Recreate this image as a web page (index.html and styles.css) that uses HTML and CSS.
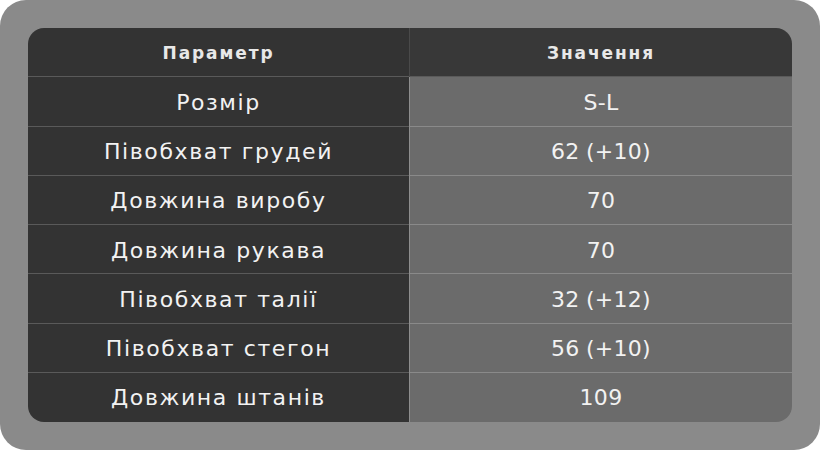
FILE: index.html
```html
<!DOCTYPE html>
<html lang="uk">
<head>
<meta charset="utf-8">
<link rel="stylesheet" href="styles.css">
</head>
<body>
<div class="frame">
  <div class="table">
    <div class="row head">
      <div class="cell key">Параметр</div>
      <div class="cell val">Значення</div>
    </div>
    <div class="row">
      <div class="cell key">Розмір</div>
      <div class="cell val">S-L</div>
    </div>
    <div class="row">
      <div class="cell key">Півобхват грудей</div>
      <div class="cell val">62 (+10)</div>
    </div>
    <div class="row">
      <div class="cell key">Довжина виробу</div>
      <div class="cell val">70</div>
    </div>
    <div class="row">
      <div class="cell key">Довжина рукава</div>
      <div class="cell val">70</div>
    </div>
    <div class="row">
      <div class="cell key">Півобхват талії</div>
      <div class="cell val">32 (+12)</div>
    </div>
    <div class="row">
      <div class="cell key">Півобхват стегон</div>
      <div class="cell val">56 (+10)</div>
    </div>
    <div class="row last">
      <div class="cell key">Довжина штанів</div>
      <div class="cell val">109</div>
    </div>
  </div>
</div>
</body>
</html>
```
FILE: styles.css
```css
html, body {
  margin: 0;
  padding: 0;
  background: #ffffff;
}
.frame {
  width: 820px;
  height: 450px;
  box-sizing: border-box;
  padding: 28px;
  background: #8a8a8a;
  border-radius: 26px;
}
.table {
  height: 394px;
  display: grid;
  grid-template-rows: repeat(8, 1fr);
  border-radius: 16px;
  overflow: hidden;
  font-family: "DejaVu Sans", sans-serif;
  color: #f2f2f2;
}
.row {
  display: grid;
  grid-template-columns: 382px 1fr;
}
.cell {
  display: flex;
  align-items: center;
  justify-content: center;
  font-size: 22px;
  letter-spacing: 1.6px;
  padding-top: 1px;
}
.key {
  background: #333333;
  border-right: 1px solid #8e8e8e;
  box-shadow: inset 0 -1px 0 #5a5a5a;
}
.val {
  background: #6b6b6b;
  box-shadow: inset 0 -1px 0 #8a8a8a;
  letter-spacing: 0.3px;
  word-spacing: -1px;
}
.last .key,
.last .val {
  box-shadow: none;
}
.head .cell {
  font-size: 17px;
  font-weight: bold;
  letter-spacing: 1.9px;
  color: #e8e8e8;
}
.head .key {
  border-right: 1px solid #4a4a4a;
}
.head .val {
  background: #383838;
  box-shadow: inset 0 -1px 0 #5a5a5a;
}
```
